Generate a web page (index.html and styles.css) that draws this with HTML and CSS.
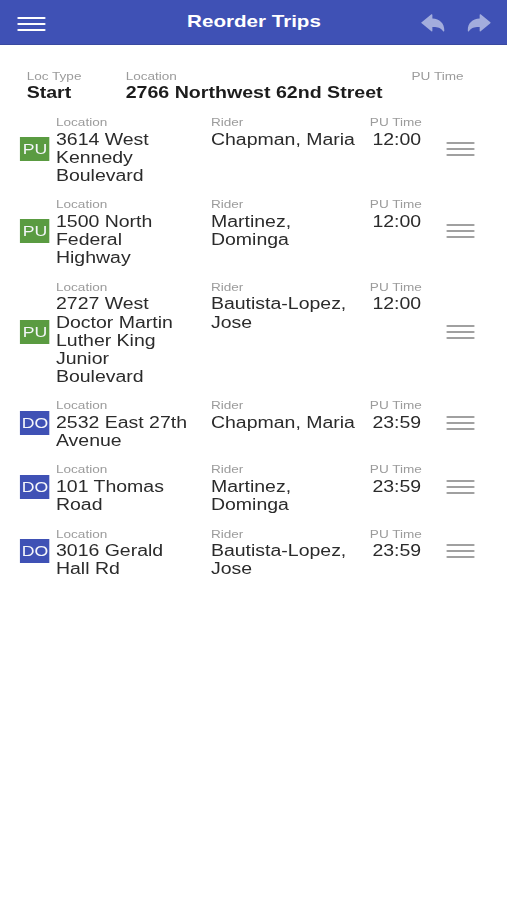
FILE: index.html
```html
<!DOCTYPE html>
<html lang="en">
<head>
<meta charset="utf-8">
<title>Reorder Trips</title>
<link rel="stylesheet" href="styles.css">
</head>
<body>
<div class="app">
  <header class="bar">
    <span class="lines menu"><i></i><i></i><i></i></span>
    <h1>Reorder Trips</h1>
    <div class="history">
      <svg viewBox="0 0 24 19" preserveAspectRatio="none"><path d="M0.6 8.8 L10.8 0.3 Q11.8 0 11.8 1 V4.6 C19 5 23.6 9.3 23.6 16.6 Q23.4 18.4 22.2 17 C19.5 13.6 17 13 11.8 13.1 V16.8 Q11.8 18 10.8 17.3 Z"/></svg>
      <svg viewBox="0 0 24 19" preserveAspectRatio="none"><path d="M23.4 8.8 L13.2 0.3 Q12.2 0 12.2 1 V4.6 C5 5 0.4 9.3 0.4 16.6 Q0.6 18.4 1.8 17 C4.5 13.6 7 13 12.2 13.1 V16.8 Q12.2 18 13.2 17.3 Z"/></svg>
    </div>
  </header>
  <section class="start">
    <div><small>Loc Type</small><b>Start</b></div>
    <div><small>Location</small><b>2766 Northwest 62nd Street</b></div>
    <div><small>PU Time</small></div>
  </section>
  <main>
    <div class="trip"><span class="tag pu">PU</span><div><small>Location</small><p>3614 West<br>Kennedy<br>Boulevard</p></div><div><small>Rider</small><p>Chapman, Maria</p></div><div class="time"><small>PU Time</small><p>12:00</p></div><span class="lines grip"><i></i><i></i><i></i></span></div>
    <div class="trip"><span class="tag pu">PU</span><div><small>Location</small><p>1500 North<br>Federal<br>Highway</p></div><div><small>Rider</small><p>Martinez,<br>Dominga</p></div><div class="time"><small>PU Time</small><p>12:00</p></div><span class="lines grip"><i></i><i></i><i></i></span></div>
    <div class="trip"><span class="tag pu">PU</span><div><small>Location</small><p>2727 West<br>Doctor Martin<br>Luther King<br>Junior<br>Boulevard</p></div><div><small>Rider</small><p>Bautista-Lopez,<br>Jose</p></div><div class="time"><small>PU Time</small><p>12:00</p></div><span class="lines grip"><i></i><i></i><i></i></span></div>
    <div class="trip"><span class="tag do">DO</span><div><small>Location</small><p>2532 East 27th<br>Avenue</p></div><div><small>Rider</small><p>Chapman, Maria</p></div><div class="time"><small>PU Time</small><p>23:59</p></div><span class="lines grip"><i></i><i></i><i></i></span></div>
    <div class="trip"><span class="tag do">DO</span><div><small>Location</small><p>101 Thomas<br>Road</p></div><div><small>Rider</small><p>Martinez,<br>Dominga</p></div><div class="time"><small>PU Time</small><p>23:59</p></div><span class="lines grip"><i></i><i></i><i></i></span></div>
    <div class="trip"><span class="tag do">DO</span><div><small>Location</small><p>3016 Gerald<br>Hall Rd</p></div><div><small>Rider</small><p>Bautista-Lopez,<br>Jose</p></div><div class="time"><small>PU Time</small><p>23:59</p></div><span class="lines grip"><i></i><i></i><i></i></span></div>
  </main>
</div>
</body>
</html>
```
FILE: styles.css
```css
* { box-sizing: border-box; }
html, body { margin: 0; background: #fff; overflow: hidden; }

/* Type and controls are drawn wide: lay out narrow, then stretch sideways. */
.app {
  --stretch: 1.233;
  width: calc(100vw / var(--stretch) + 1px);
  height: 100vh;
  transform: scaleX(var(--stretch));
  transform-origin: 0 0;
  font-family: "Liberation Sans", Arial, sans-serif;
  font-size: 15.8px;
  line-height: 18.2px;
  color: #2b2b2b;
}

.bar {
  display: grid;
  grid-template-columns: 1fr auto 1fr;
  align-items: center;
  height: 45px;
  padding: 0 14px 0 13.8px;
  background: #3f51b5;
  border-bottom: 1px solid #3949a0;
  color: #fff;
}
.bar h1 { margin: 0; font-size: 16.7px; line-height: 20px; }
.history { display: flex; justify-content: flex-end; gap: 17.8px; }
.history svg { width: 19.7px; height: 19px; fill: #a3addd; margin-top: 2px; }

.lines { display: flex; flex-direction: column; justify-content: space-between; }
.lines i { display: block; height: 2px; border-radius: 1px; }
.menu { width: 23px; height: 14px; margin-top: 3px; }
.menu i { background: #fff; }
.grip { width: 23.4px; height: 14px; }
.grip i { background: #a0a0a0; }

small { display: block; font-size: 11px; line-height: 14px; color: #9b9b9b; white-space: nowrap; }
p { margin: 0; white-space: nowrap; }
b { display: block; font-size: 15.9px; white-space: nowrap; }

.start {
  display: grid;
  grid-template-columns: 80.3px 231.9px auto;
  height: 61.8px;
  padding: 24px 0 0 21.6px;
  color: #1c1c1c;
}
.start b { margin-top: 1.3px; }

.trip {
  display: grid;
  grid-template-columns: 29.1px 125.7px 122.4px 68.4px 23.4px;
  align-items: center;
  padding: 8.3px 0 3.7px 16.3px;
}
.trip > div { align-self: start; }
.trip p { padding-top: 1.7px; }
.time small { padding-left: 6.5px; }
.trip .time p { padding-left: 8.6px; }
.tag, .grip { position: relative; top: -1.3px; }
.tag { width: 24px; height: 24px; line-height: 24px; font-size: 14.3px; text-align: center; color: #f4f6fa; }
.pu { background: #5a9b41; }
.do { background: #3f51b5; }
```
